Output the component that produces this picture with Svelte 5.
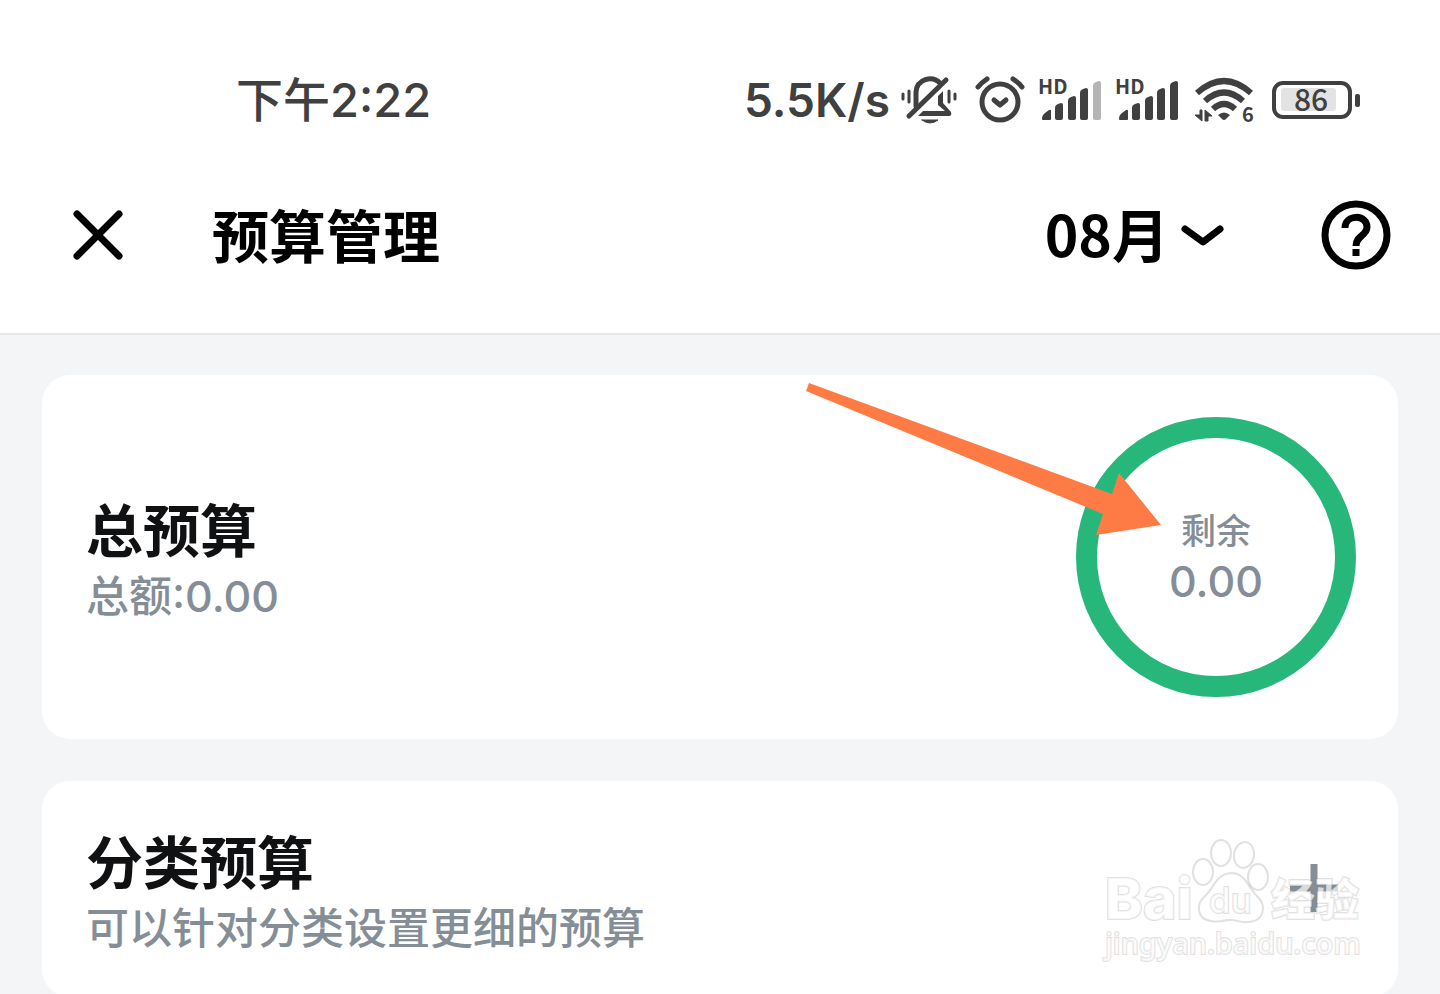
<script lang="ts">
	const month = "08";
	const total = "0.00";
	const remaining = "0.00";

	const bars = [
		"M5 44 q0 -4 3 -6 l4 -3 q2 -1 2 1 v8 q0 1 -1 1 h-7 q-1 0 -1 -1z",
		"M18 33 q0 -3 3 -4 l3 -1 q2 0 2 2 v13 q0 2 -2 2 h-4 q-2 0 -2 -2z",
		"M31 26 q0 -3 3 -4 l3 -1 q2 0 2 2 v20 q0 2 -2 2 h-4 q-2 0 -2 -2z",
		"M43 18 q0 -3 3 -4 l3 -1 q2 0 2 2 v28 q0 2 -2 2 h-4 q-2 0 -2 -2z",
		"M56 11 q0 -3 3 -4 l3 -1 q2 0 2 2 v35 q0 2 -2 2 h-4 q-2 0 -2 -2z"
	];
	const signals = [4, 5];
</script>

<div class="screen">
	<header>
		<div class="status">
			<time>下午2:22</time>
			<div class="indicators">
				<span class="speed">5.5K/s</span>
				<svg class="mute" width="58" height="50" viewBox="0 0 58 50" fill="none" stroke="#404040" stroke-width="4" stroke-linecap="round" stroke-linejoin="round">
					<path d="M16 31 V17 C17 4 32 0 40 8" stroke-width="5" />
					<path d="M46 5 L9 41" stroke-width="5" />
					<path d="M43 16 V28 L51 37 Q52 41 49 41 H18 L23 36 H45 L38 30 V21z" fill="#404040" stroke="none" />
					<path d="M3 19 V24 M9 16 V27 M49 16 V27 M55 19 V24" stroke-width="3" />
					<path d="M22 45 H38 Q30 51 22 45" fill="#404040" stroke-width="1" />
				</svg>
				<svg class="alarm" width="52" height="50" viewBox="0 0 52 50" fill="none" stroke="#404040" stroke-width="5" stroke-linecap="round" stroke-linejoin="round">
					<circle cx="26" cy="27" r="18" />
					<path d="M20 25 L26 30 L32 25" />
					<path d="M4 12 Q7 8 13 4 M39 4 Q45 8 48 12" />
				</svg>
				{#each signals as level}
					<svg class="signal" width="66" height="50" viewBox="0 0 66 50" fill="#404040">
						{#each bars as bar, i}
							<path d={bar} fill={i < level ? "#404040" : "#b5b5b5"} />
						{/each}
						<text x="1" y="19" font-size="20" font-weight="700">HD</text>
					</svg>
				{/each}
				<svg class="wifi" width="60" height="50" viewBox="0 0 60 50" fill="none" stroke="#404040" stroke-width="6">
					<path d="M3 18 Q30 -6 57 18" />
					<path d="M11 26 Q30 9 49 26" />
					<path d="M19 34 Q30 24 41 34" />
					<path d="M24 40 Q30 35 36 40 L32 44 Q30 46 28 44z" fill="#404040" stroke="none" />
					<path d="M8 35 V46 L1 40 H6 V35z M11 46 V35 L18 41 H14 V46z" fill="#404040" stroke-width="1" />
					<text x="48" y="47" font-size="20" font-weight="700" fill="#404040" stroke="none">6</text>
				</svg>
				<svg class="battery" width="90" height="50" viewBox="0 0 90 50">
					<rect x="3" y="8" width="76" height="34" rx="9" fill="none" stroke="#404040" stroke-width="4" />
					<rect x="10" y="13" width="55" height="23" rx="3" fill="#e3e3e3" />
					<rect x="84" y="19" width="5" height="13" rx="2" fill="#404040" />
					<text x="40" y="36" text-anchor="middle" font-size="30" font-weight="500" fill="#404040">86</text>
				</svg>
			</div>
		</div>

		<nav>
			<button class="close" aria-label="关闭">
				<svg width="52" height="52" viewBox="0 0 52 52" fill="none" stroke="#000" stroke-width="7" stroke-linecap="round">
					<path d="M5 5 L47 47 M47 5 L5 47" />
				</svg>
			</button>
			<h1>预算管理</h1>
			<button class="month">
				<span>{month}月</span>
				<svg width="44" height="24" viewBox="0 0 44 24" fill="none" stroke="#000" stroke-width="7" stroke-linecap="round" stroke-linejoin="round">
					<path d="M4 6 L22 19 L39 6" />
				</svg>
			</button>
			<button class="help" aria-label="帮助">
				<svg width="70" height="70" viewBox="0 0 70 70" fill="none" stroke="#000" stroke-width="7">
					<circle cx="35" cy="35" r="31" />
					<path d="M24 28 C24 14 46 14 46 27 C46 36 35 35 35 46" />
					<path d="M35 49 V56" />
				</svg>
			</button>
		</nav>
	</header>

	<main>
		<section class="card total">
			<div class="info">
				<h2>总预算</h2>
				<p>总额:{total}</p>
			</div>
			<div class="ring">
				<span class="label">剩余</span>
				<span class="value">{remaining}</span>
			</div>
			<svg class="arrow" width="356" height="154" viewBox="0 0 356 154">
				<path d="M4 0 L307 111 L314 90 L356 142 L291 152 L298 131 L1 8z" fill="#ff7b45" />
			</svg>
		</section>

		<section class="card category">
			<div class="info">
				<h2>分类预算</h2>
				<p>可以针对分类设置更细的预算</p>
			</div>
			<button class="add" aria-label="添加">
				<svg width="50" height="50" viewBox="0 0 50 50" stroke="#858e96" stroke-width="7">
					<path d="M25 0 V48 M1 24 H49" />
				</svg>
			</button>
			<svg class="watermark" width="270" height="130" viewBox="0 0 270 130">
				<text class="logo" x="5" y="84" font-size="57">Bai</text>
				<ellipse cx="103" cy="37" rx="10" ry="13" />
				<ellipse cx="121" cy="18" rx="10" ry="13" />
				<ellipse cx="144" cy="20" rx="10" ry="13" transform="rotate(8 144 20)" />
				<ellipse cx="158" cy="42" rx="10" ry="13" />
				<path d="M131 38 C146 38 148 53 157 61 C168 72 163 86 149 87 C140 88 138 85 130 85 C122 85 119 88 111 86 C96 84 96 69 105 61 C114 53 116 39 131 38z" />
				<text class="logo du" x="109" y="78" font-size="35">du</text>
				<text class="logo" x="171" y="81" font-size="44">经验</text>
				<text class="url" x="5" y="119" font-size="29">jingyan.baidu.com</text>
			</svg>
		</section>
	</main>
</div>

<style>
	:global(body) {
		margin: 0;
		background: #f4f5f7;
	}

	.screen {
		height: 100vh;
		overflow: hidden;
		font-family: Inter, "Noto Sans CJK SC", sans-serif;
		color: #101113;
	}

	header {
		background: #fff;
		border-bottom: 2px solid #e6e7e8;
	}

	.status {
		display: flex;
		align-items: center;
		justify-content: space-between;
		padding: 72px 79px 0 236px;
		height: 56px;
		color: #404040;
		font-size: 47px;
		font-weight: 500;
		line-height: 56px;
	}

	.indicators {
		display: flex;
		align-items: center;
	}

	.indicators svg {
		display: block;
		overflow: visible;
	}

	.indicators text {
		font-family: "Noto Sans CJK SC", sans-serif;
	}

	.speed {
		margin-right: 10px;
		font-size: 46px;
		font-weight: 600;
	}

	.alarm {
		margin-left: 16px;
	}

	.signal {
		margin-left: 11px;
	}

	.wifi {
		margin-left: 14px;
	}

	.battery {
		margin-left: 17px;
	}

	nav {
		display: flex;
		align-items: center;
		padding: 67px 49px 58px 72px;
	}

	button {
		display: flex;
		align-items: center;
		padding: 0;
		border: 0;
		background: none;
		color: #000;
		font: inherit;
		cursor: pointer;
	}

	h1,
	h2,
	p {
		margin: 0;
	}

	h1 {
		flex: 1;
		margin-left: 88px;
		padding-top: 6px;
		color: #000;
		font-size: 57px;
		font-weight: 700;
		line-height: 74px;
	}

	.month {
		gap: 12px;
		margin-right: 96px;
		font-family: "Noto Sans CJK SC", sans-serif;
		font-size: 57px;
		font-weight: 700;
		line-height: 74px;
	}

	.month span {
		padding-bottom: 6px;
	}

	main {
		display: flex;
		flex-direction: column;
		gap: 42px;
		padding: 40px 42px;
	}

	.card {
		position: relative;
		display: flex;
		align-items: center;
		justify-content: space-between;
		padding: 42px 42px 42px 44px;
		border-radius: 28px;
		background: #fff;
	}

	.category {
		padding: 41px 59px 41px 44px;
	}

	.info {
		padding-top: 6px;
	}

	h2 {
		font-size: 57px;
		font-weight: 700;
		line-height: 72px;
	}

	p {
		color: #858e96;
		font-size: 43px;
		font-weight: 500;
		line-height: 56px;
	}

	.ring {
		display: flex;
		flex-direction: column;
		align-items: center;
		justify-content: center;
		box-sizing: border-box;
		width: 280px;
		height: 280px;
		padding-top: 4px;
		border: 21px solid #27b77b;
		border-radius: 50%;
		color: #858e96;
		font-weight: 500;
	}

	.label {
		font-size: 35px;
		line-height: 44px;
	}

	.value {
		font-size: 43px;
		line-height: 56px;
	}

	.arrow {
		position: absolute;
		top: 8px;
		right: 237px;
	}

	.watermark {
		position: absolute;
		top: 54px;
		right: 28px;
		fill: rgba(255, 255, 255, 0.7);
		stroke: rgba(120, 120, 120, 0.22);
		stroke-width: 2;
		pointer-events: none;
	}

	.watermark text {
		paint-order: stroke;
	}

	.logo {
		font-weight: 800;
	}

	.du {
		font-weight: 500;
	}

	.url {
		font-family: "Noto Sans", sans-serif;
		font-weight: 500;
	}
</style>
